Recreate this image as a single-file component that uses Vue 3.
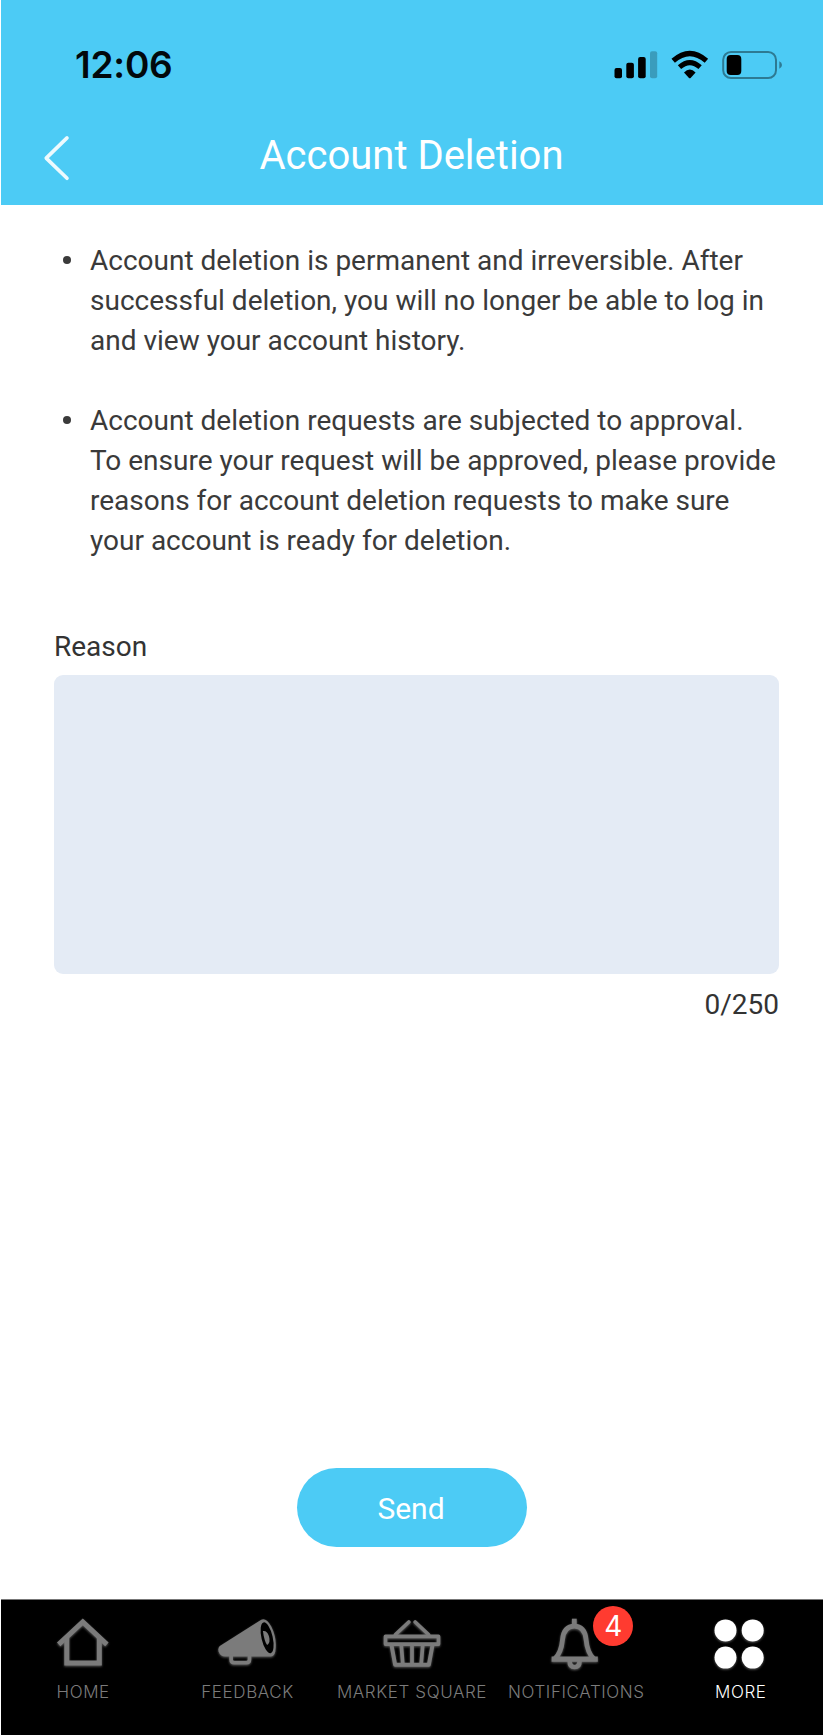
<script setup>
import { ref } from 'vue'

const limit = 250
const reason = ref('')

const notices = [
  ['Account deletion is permanent and irreversible. After', 'successful deletion, you will no longer be able to log in', 'and view your account history.'],
  ['Account deletion requests are subjected to approval.', 'To ensure your request will be approved, please provide', 'reasons for account deletion requests to make sure', 'your account is ready for deletion.'],
]

const tabs = [
  { id: 'home', label: 'HOME' },
  { id: 'feedback', label: 'FEEDBACK' },
  { id: 'market', label: 'MARKET SQUARE' },
  { id: 'notifications', label: 'NOTIFICATIONS', badge: 4 },
  { id: 'more', label: 'MORE', active: true },
]
</script>

<template>
  <div class="screen">
    <header class="header">
      <div class="status">
        <span class="time">12:06</span>
        <svg class="indicators" width="168" height="30" viewBox="0 0 168 30">
          <rect x="0.5" y="18" width="7.5" height="10.3" rx="2" />
          <rect x="12.3" y="12.8" width="7.6" height="15.5" rx="2" />
          <rect x="24.1" y="7" width="7.6" height="21.3" rx="2" />
          <rect x="36" y="1.2" width="7.2" height="27.1" rx="2" opacity="0.23" />
          <g fill="none" stroke="#000" stroke-width="5.2">
            <path d="M59.2 10.8 Q75.8 -3.8 92.4 10.8" />
            <path d="M65.5 17.2 Q75.8 8.2 86.1 17.2" stroke-width="5" />
          </g>
          <path d="M70 22.4 Q75.8 16.6 81.6 22.4 L76.6 28 Q75.8 28.6 75 28 Z" />
          <rect x="109.2" y="1.9" width="52.8" height="26.1" rx="7.8" fill="none" stroke="#000" stroke-opacity="0.4" stroke-width="2" />
          <rect x="112.7" y="5" width="14.6" height="20" rx="4" />
          <path d="M165.3 11.2 Q168 12.4 168 15 Q168 17.6 165.3 18.8 Z" opacity="0.4" />
        </svg>
      </div>
      <div class="titlebar">
        <svg class="back" width="28" height="48" viewBox="0 0 28 48">
          <path d="M25 3.9 L4.2 24.1 L25 44.3" fill="none" stroke="#fff" stroke-opacity="0.9" stroke-width="3.6" stroke-linecap="round" stroke-linejoin="round" />
        </svg>
        <h1 class="title">Account Deletion</h1>
        <span class="balance"></span>
      </div>
    </header>

    <main class="content">
      <ul class="notices">
        <li v-for="(lines, i) in notices" :key="i" class="notice">
          <span class="dot"></span>
          <div class="copy">
            <p v-for="line in lines" :key="line" class="line">{{ line }}</p>
          </div>
        </li>
      </ul>
      <label class="label" for="reason">Reason</label>
      <textarea id="reason" v-model="reason" class="field" :maxlength="limit"></textarea>
      <div class="counter">{{ reason.length }}/{{ limit }}</div>
      <button class="send" type="button">Send</button>
    </main>

    <nav class="tabs">
      <div v-for="tab in tabs" :key="tab.id" class="tab" :class="{ active: tab.active }">
        <div class="icon-box">
          <svg class="icon" width="60" height="56" viewBox="0 0 60 56">
            <g v-if="tab.id === 'home'" fill="none" stroke="currentColor" stroke-width="5">
              <path d="M5.7 28.3 L29.8 5.9 L53.9 28.3" />
              <path d="M13.8 22 V47.1 H46.3 V22" />
            </g>
            <g v-else-if="tab.id === 'feedback'" transform="translate(-.7 .5)">
              <path d="M2.5 29.5 L44 3.2 Q49 1 54 10 Q60 22 58 35 Q57 40 53 40 L8 40 Q3 40 1.3 35 Q.5 31 2.5 29.5 Z" fill="currentColor" />
              <path d="M13.8 38 V43 Q13.8 46.2 17 46.2 H29 Q32.2 46.2 32.2 43 V38" fill="none" stroke="currentColor" stroke-width="3.7" />
              <ellipse cx="49.8" cy="21.3" rx="5.6" ry="15.8" transform="rotate(-13 49.8 21.3)" fill="#000" />
              <path d="M45.6 14.6 Q49.5 13.8 51.6 19.5 Q53.5 26 49.8 28.5 Q47 25 45.6 14.6 Z" fill="currentColor" />
            </g>
            <g v-else-if="tab.id === 'market'" fill="none" stroke="currentColor" stroke-width="3.7" stroke-linejoin="round">
              <path d="M13.5 18.5 L26.8 6 M46.5 18.5 L33.2 6" stroke-linecap="round" />
              <rect x="3.5" y="20.3" width="53" height="7.8" />
              <path d="M9.3 28 L13.1 48.7 H46.9 L50.7 28" stroke-width="4" />
              <path d="M19.2 28 L20.8 48 M30 28 V48 M40.8 28 L39.2 48" />
            </g>
            <g v-else-if="tab.id === 'notifications'" fill="none" stroke="currentColor" transform="translate(-1.2 -.3)">
              <path d="M29.5 3 V9" stroke-width="4.8" />
              <path d="M10 43 Q16.5 37 17.7 24 Q19 10.5 29.5 10.5 Q40 10.5 41.3 24 Q42.5 37 49 43" stroke-width="4.8" />
              <path d="M6.8 43.5 H53" stroke-width="5.2" />
              <path d="M24.8 45 Q24.8 51.3 29.8 51.3 Q34.8 51.3 34.8 45" stroke-width="4.6" />
            </g>
            <g v-else fill="currentColor">
              <circle cx="14.5" cy="14.4" r="11" />
              <circle cx="41.7" cy="14.4" r="11" />
              <circle cx="14.5" cy="41.6" r="11" />
              <circle cx="41.7" cy="41.6" r="11" />
            </g>
          </svg>
          <span v-if="tab.badge" class="badge">{{ tab.badge }}</span>
        </div>
        <span class="tab-label">{{ tab.label }}</span>
      </div>
    </nav>
  </div>
</template>

<style>
body {
  margin: 0;
  background: #fff;
}
</style>

<style scoped>
.screen {
  box-sizing: border-box;
  width: 823px;
  height: 1735px;
  padding-left: 1px;
  display: flex;
  flex-direction: column;
  background: #fff;
  color: #3a3a3a;
  font-family: Roboto, "Liberation Sans", sans-serif;
}
.header {
  height: 205px;
  background: #4ccbf5;
}
.status {
  height: 110px;
  padding: 0 41px 0 74px;
  display: flex;
  justify-content: space-between;
}
.time {
  margin-top: 43px;
  font: 600 37px/44px Inter, sans-serif;
  letter-spacing: -0.2px;
  color: #02080c;
}
.indicators {
  margin-top: 50px;
}
.titlebar {
  height: 95px;
  padding: 0 42px 0 41px;
  display: flex;
  justify-content: space-between;
}
.back {
  margin-top: 24px;
}
.title {
  margin: 22px 0 0;
  font-size: 40px;
  line-height: 48px;
  font-weight: 400;
  color: #fff;
}
.balance {
  width: 28px;
}
.content {
  flex: 1;
  padding: 36px 44px 0 53px;
  display: flex;
  flex-direction: column;
}
.notices {
  list-style: none;
  margin: 0;
  padding: 0;
  display: flex;
  flex-direction: column;
  gap: 40px;
}
.notice {
  display: flex;
  padding-left: 9px;
}
.dot {
  flex: none;
  width: 8px;
  height: 8px;
  margin: 15px 19px 0 0;
  border-radius: 50%;
  background: #3a3a3a;
}
.line {
  margin: 0;
  font-size: 28px;
  line-height: 40px;
  white-space: nowrap;
}
.label {
  margin-top: 66px;
  font-size: 28px;
  line-height: 40px;
  color: #333;
}
.field {
  box-sizing: border-box;
  width: 725px;
  height: 299px;
  margin: 8px 0 0;
  border: 0;
  border-radius: 9px;
  background: #e4ebf5;
  resize: none;
  outline: none;
}
.counter {
  margin-top: 11px;
  text-align: right;
  font-size: 28px;
  line-height: 40px;
  color: #333;
}
.send {
  box-sizing: border-box;
  align-self: center;
  width: 230px;
  height: 79px;
  margin: 443px 0 0 -9px;
  padding: 2px 2px 0 0;
  border: 0;
  border-radius: 40px;
  background: #4ccbf5;
  color: #fff;
  font: 400 30px/77px Roboto, sans-serif;
}
.tabs {
  box-sizing: border-box;
  height: 136px;
  border-top: 1px solid #777;
  background: #000;
  display: grid;
  grid-template-columns: repeat(5, 1fr);
}
.tab {
  display: flex;
  flex-direction: column;
  align-items: center;
  padding-top: 16px;
  color: #7b7b7b;
}
.tab.active {
  color: #fff;
}
.icon-box {
  position: relative;
  width: 60px;
  height: 56px;
}
.icon {
  display: block;
  filter: drop-shadow(0 1px 1px rgba(255, 255, 255, 0.35));
}
.badge {
  position: absolute;
  left: 47px;
  top: -10px;
  width: 40px;
  height: 40px;
  border-radius: 50%;
  background: #ff3b30;
  color: #fff;
  font: 400 28px/40px Inter, sans-serif;
  text-align: center;
}
.tab-label {
  margin-top: 9px;
  font: 350 17px/22px Inter, sans-serif;
  letter-spacing: 0.6px;
  white-space: nowrap;
}
</style>
